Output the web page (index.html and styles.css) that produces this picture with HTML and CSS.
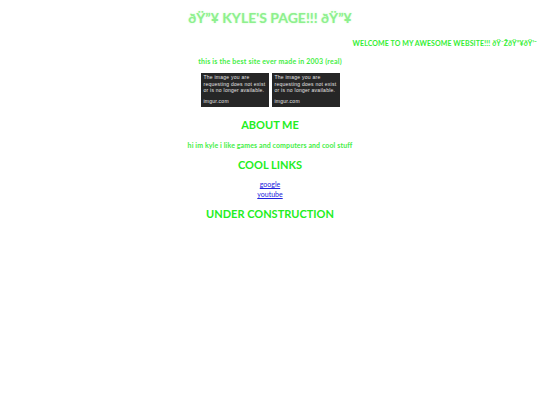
FILE: index.html
```html
<!DOCTYPE html>
<html>
<head>
<meta charset="utf-8">
<title>KYLE'S PAGE</title>
<link rel="stylesheet" href="styles.css">
</head>
<body>
<h1 class="title">ðŸ”¥ KYLE'S PAGE!!! ðŸ”¥</h1>
<div class="welcome">WELCOME TO MY AWESOME WEBSITE!!! ðŸ˜ŽðŸ”¥ðŸ’¯</div>
<p class="text tagline">this is the best site ever made in 2003 (real)</p>
<div class="pics">
  <div class="pic">
    <p class="pic-msg">The image you are<br>requesting does not exist<br>or is no longer available.</p>
    <p class="pic-src">imgur.com</p>
  </div>
  <div class="pic">
    <p class="pic-msg">The image you are<br>requesting does not exist<br>or is no longer available.</p>
    <p class="pic-src">imgur.com</p>
  </div>
</div>
<h2 class="head about">ABOUT ME</h2>
<p class="text">hi im kyle i like games and computers and cool stuff</p>
<h2 class="head cool">COOL LINKS</h2>
<div class="links">
  <a class="link" href="#">google</a>
  <a class="link" href="#">youtube</a>
</div>
<h2 class="head under">UNDER CONSTRUCTION</h2>
</body>
</html>
```
FILE: styles.css
```css
body {
  margin: 0;
  background: #ffffff;
  font-family: "Comic Sans MS", "Lato", "DejaVu Sans", sans-serif;
  text-align: center;
}
.title {
  margin: 10px 0 0;
  font-size: 14px;
  line-height: 16px;
  font-weight: bold;
  color: #8ef08e;
  text-shadow: 0 0 2px #c8ffc8;
}
.welcome {
  margin-top: 13px;
  text-align: right;
  padding-right: 3px;
  font-size: 7px;
  line-height: 9px;
  font-weight: bold;
  letter-spacing: 0.1px;
  color: #33ee33;
}
.text {
  margin: 0;
  font-size: 7px;
  line-height: 9px;
  font-weight: bold;
  letter-spacing: 0.1px;
  color: #44ee44;
}
.tagline {
  margin-top: 9px;
  letter-spacing: 0.2px;
}
.pics {
  display: flex;
  justify-content: center;
  gap: 3px;
  margin-top: 7px;
}
.pic {
  width: 68px;
  height: 34px;
  box-sizing: border-box;
  background: #262626;
  padding: 1px 3px 3px;
  text-align: left;
  display: flex;
  flex-direction: column;
  justify-content: space-between;
  overflow: hidden;
}
.pic p {
  margin: 0;
  color: #e6e6e6;
  font-family: "Liberation Sans", Arial, sans-serif;
  font-size: 5px;
  line-height: 6.5px;
  letter-spacing: 0.25px;
  white-space: nowrap;
}
.head {
  margin: 11px 0 10px;
  font-size: 11px;
  line-height: 13px;
  font-weight: bold;
  color: #22ee22;
}
.cool {
  margin: 8px 0 8px;
}
.under {
  margin-top: 8px;
}
.links {
  display: flex;
  flex-direction: column;
  align-items: center;
}
.link {
  font-size: 7px;
  line-height: 10px;
  color: #2222dd;
}
```
